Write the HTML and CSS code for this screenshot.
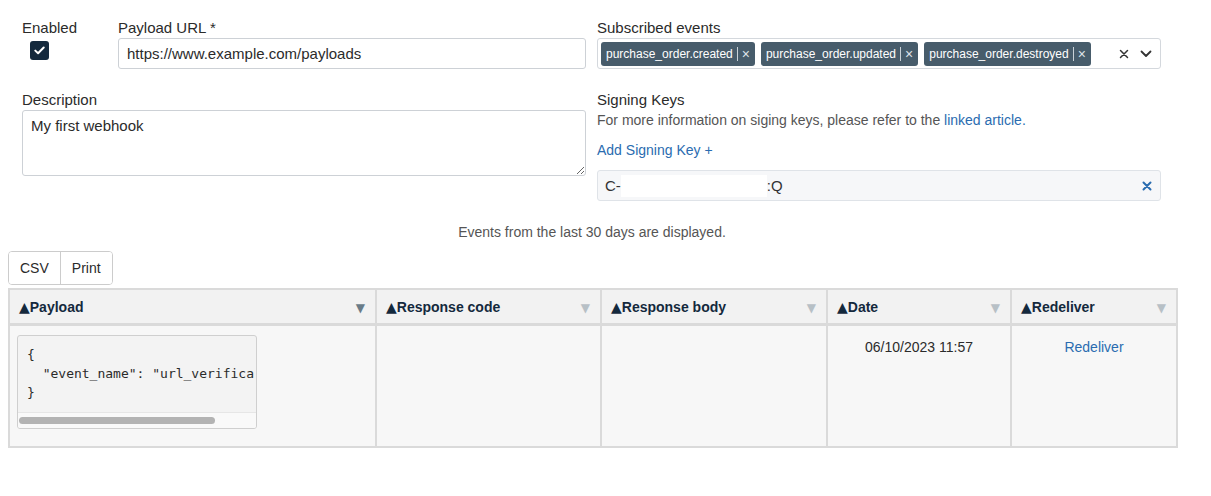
FILE: index.html
```html
<!DOCTYPE html>
<html>
<head>
<meta charset="utf-8">
<link rel="stylesheet" href="styles.css">
</head>
<body>
<div class="form">
  <div class="col">
    <div class="row-top">
      <div class="enabled">
        <div class="label">Enabled</div>
        <div class="checkbox">
          <svg width="11" height="9" viewBox="0 0 11 9"><path d="M1.3 4.6 L4.1 7.3 L9.7 1.5" fill="none" stroke="#fff" stroke-width="2" stroke-linecap="round" stroke-linejoin="round"/></svg>
        </div>
      </div>
      <div class="payload">
        <div class="label">Payload URL *</div>
        <div class="input">https://www.example.com/payloads</div>
      </div>
    </div>
    <div class="row-second">
      <div class="label">Description</div>
      <textarea class="textarea">My first webhook</textarea>
    </div>
  </div>
  <div class="col">
    <div class="label">Subscribed events</div>
    <div class="select">
      <div class="tags">
        <span class="tag"><span class="tag-text">purchase_order.created</span><span class="tag-sep"></span><span class="tag-x">×</span></span>
        <span class="tag"><span class="tag-text">purchase_order.updated</span><span class="tag-sep"></span><span class="tag-x">×</span></span>
        <span class="tag"><span class="tag-text">purchase_order.destroyed</span><span class="tag-sep"></span><span class="tag-x">×</span></span>
      </div>
      <div class="select-icons">
        <svg width="10" height="10" viewBox="0 0 10 10"><path d="M1.5 1.5 L8.5 8.5 M8.5 1.5 L1.5 8.5" stroke="#333" stroke-width="1.5" stroke-linecap="round"/></svg>
        <svg width="12" height="8" viewBox="0 0 12 8"><path d="M1.5 1.5 L6 6 L10.5 1.5" fill="none" stroke="#333" stroke-width="1.8" stroke-linecap="round" stroke-linejoin="round"/></svg>
      </div>
    </div>
    <div class="row-second">
      <div class="label">Signing Keys</div>
      <div class="help">For more information on siging keys, please refer to the <a class="link">linked article.</a></div>
      <div class="add-key"><a class="link">Add Signing Key +</a></div>
      <div class="key-input">
        <span class="key-text">C-<span class="redact"></span>:Q</span>
        <svg width="10" height="10" viewBox="0 0 10 10"><path d="M1.5 1.5 L8.5 8.5 M8.5 1.5 L1.5 8.5" stroke="#2a6cb0" stroke-width="2" stroke-linecap="round"/></svg>
      </div>
    </div>
  </div>
</div>

<div class="events">
  <div class="note">Events from the last 30 days are displayed.</div>
  <div class="btn-group">
    <button class="btn">CSV</button><button class="btn">Print</button>
  </div>
  <table class="table">
    <colgroup>
      <col class="c1"><col class="c2"><col class="c3"><col class="c4"><col class="c5">
    </colgroup>
    <thead>
      <tr>
        <th><div class="th"><span><span class="up">▲</span>Payload</span><span class="sort dark">▼</span></div></th>
        <th><div class="th"><span><span class="up">▲</span>Response code</span><span class="sort">▼</span></div></th>
        <th><div class="th"><span><span class="up">▲</span>Response body</span><span class="sort">▼</span></div></th>
        <th><div class="th"><span><span class="up">▲</span>Date</span><span class="sort">▼</span></div></th>
        <th><div class="th"><span><span class="up">▲</span>Redeliver</span><span class="sort">▼</span></div></th>
      </tr>
    </thead>
    <tbody>
      <tr>
        <td class="code-cell">
          <div class="code">
            <pre class="pre">{
  "event_name": "url_verifica
}</pre>
            <div class="scroll"><div class="thumb"></div></div>
          </div>
        </td>
        <td></td>
        <td></td>
        <td class="center"><div class="cell-text">06/10/2023 11:57</div></td>
        <td class="center"><div class="cell-text"><a class="link">Redeliver</a></div></td>
      </tr>
    </tbody>
  </table>
</div>
</body>
</html>
```

FILE: styles.css
```css
body {
  margin: 0;
  font-family: "Liberation Sans", Arial, sans-serif;
  font-size: 15px;
  color: #2b2b2b;
  background: #fff;
}

.form {
  display: grid;
  grid-template-columns: 564px 564px;
  column-gap: 11px;
  padding: 18px 0 0 22px;
}

.row-top {
  display: flex;
}

.enabled {
  width: 96px;
}

.label {
  height: 20px;
  line-height: 20px;
  font-size: 15px;
  color: #2b2b2b;
}

.checkbox {
  margin: 3px 0 0 8px;
  width: 19px;
  height: 19px;
  border-radius: 3px;
  background: #14293d;
  display: flex;
  align-items: center;
  justify-content: center;
}

.payload {
  flex: 1;
}

.input {
  height: 31px;
  box-sizing: border-box;
  border: 1px solid #cdd1d6;
  border-radius: 3px;
  padding: 0 8px;
  line-height: 29px;
  font-size: 15px;
  color: #2b2b2b;
}

.row-second {
  margin-top: 21px;
}

.textarea {
  display: block;
  width: 100%;
  height: 66px;
  box-sizing: border-box;
  border: 1px solid #cdd1d6;
  border-radius: 3px;
  padding: 6px 8px;
  font-family: "Liberation Sans", Arial, sans-serif;
  font-size: 15px;
  line-height: 17px;
  color: #2b2b2b;
  resize: vertical;
  margin: 0;
}

.select {
  height: 31px;
  box-sizing: border-box;
  border: 1px solid #d4d8dd;
  border-radius: 3px;
  display: flex;
  align-items: center;
  justify-content: space-between;
  padding: 0 8px 0 3px;
}

.tags {
  display: flex;
  gap: 6px;
}

.tag {
  display: inline-flex;
  align-items: center;
  height: 24px;
  background: #475c6b;
  color: #fff;
  border-radius: 3px;
  font-size: 12px;
  padding: 0 5px 0 5px;
}

.tag-sep {
  width: 1px;
  height: 14px;
  background: #c9d1d7;
  margin: 0 4px 0 4px;
}

.tag-x {
  font-size: 14px;
  color: #dde3e8;
}

.select-icons {
  display: flex;
  align-items: center;
  gap: 11px;
}

.help {
  height: 20px;
  line-height: 20px;
  font-size: 14px;
  color: #555;
}

.link {
  color: #2a6cb0;
  text-decoration: none;
  cursor: pointer;
}

.add-key {
  margin-top: 10px;
  height: 20px;
  line-height: 20px;
  font-size: 14px;
}

.key-input {
  margin-top: 10px;
  height: 31px;
  box-sizing: border-box;
  border: 1px solid #dfe3e8;
  border-radius: 3px;
  background: #f6f7f9;
  display: flex;
  align-items: center;
  justify-content: space-between;
  padding: 0 8px 0 7px;
}

.key-text {
  display: flex;
  align-items: center;
  font-size: 15px;
  color: #333;
}

.redact {
  display: inline-block;
  width: 146px;
  height: 22px;
  background: #fff;
}

.events {
  width: 1168px;
  margin: 21px 0 0 8px;
}

.note {
  height: 20px;
  line-height: 20px;
  font-size: 14px;
  color: #555;
  text-align: center;
}

.btn-group {
  margin-top: 9px;
  display: inline-flex;
  border: 1px solid #cccccc;
  border-radius: 4px;
  overflow: hidden;
}

.btn {
  height: 32px;
  background: #fff;
  border: none;
  font-family: "Liberation Sans", Arial, sans-serif;
  font-size: 14px;
  color: #2b2b2b;
  padding: 0 11px;
  margin: 0;
}

.btn + .btn {
  border-left: 1px solid #cccccc;
}

.table {
  margin-top: 3px;
  width: 1168px;
  table-layout: fixed;
  border-collapse: collapse;
  border: 2px solid #dadada;
}

.c1 { width: 367px; }
.c2 { width: 225px; }
.c3 { width: 226px; }
.c4 { width: 184px; }
.c5 { width: 166px; }

.table th {
  height: 33px;
  background: #f2f2f2;
  border: 2px solid #dadada;
  border-bottom-width: 3px;
  padding: 0 10px 0 9px;
  text-align: left;
}

.th {
  display: flex;
  justify-content: space-between;
  align-items: center;
  font-size: 14px;
  font-weight: bold;
  color: #14293d;
}

.up {
  font-family: "DejaVu Sans", sans-serif;
  font-size: 14px;
  font-weight: normal;
  margin-right: 0;
}

.sort {
  font-family: "DejaVu Sans", sans-serif;
  font-size: 12px;
  color: #b7c0c6;
  font-weight: normal;
  margin-top: 2px;
}

.sort.dark {
  color: #6a7c88;
}

.table td {
  height: 122px;
  background: #f7f7f7;
  border: 2px solid #dadada;
  vertical-align: top;
  padding: 9px 9px;
  box-sizing: border-box;
}

.table td.code-cell {
  padding-left: 7px;
}

.center {
  text-align: center;
}

.cell-text {
  padding-top: 4px;
  font-size: 14px;
  line-height: 17px;
  color: #2b2b2b;
}

.code {
  width: 240px;
  box-sizing: border-box;
  border: 1px solid #cfcfcf;
  border-radius: 3px;
  background: #f3f3f3;
  overflow: hidden;
}

.pre {
  margin: 0;
  padding: 9px 9px 10px;
  font-family: "DejaVu Sans Mono", "Liberation Mono", monospace;
  font-size: 13px;
  line-height: 19px;
  color: #2b2b2b;
  overflow: hidden;
  white-space: pre;
}

.scroll {
  height: 15px;
  background: #f9f9f9;
  border-top: 1px solid #e6e6e6;
  display: flex;
  align-items: center;
  padding-left: 1px;
}

.thumb {
  width: 196px;
  height: 7px;
  border-radius: 4px;
  background: #b3b3b3;
}
```
